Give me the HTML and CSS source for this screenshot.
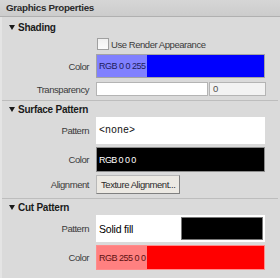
FILE: index.html
```html
<!DOCTYPE html>
<html>
<head>
<meta charset="utf-8">
<link rel="stylesheet" href="styles.css">
</head>
<body>
<div class="panel">
  <div class="header">Graphics Properties</div>
  <div class="body">
    <div class="section">
      <div class="sec-title first"><span class="tri"></span>Shading</div>
      <div class="row row-check">
        <div class="label"></div>
        <div class="check"><span class="box"></span>Use Render Appearance</div>
      </div>
      <div class="row row-color">
        <div class="label">Color</div>
        <div class="swatch blue"><span class="tag tag-blue">RGB 0 0 255</span></div>
      </div>
      <div class="row row-trans">
        <div class="label">Transparency</div>
        <div class="trans">
          <div class="slider"></div>
          <div class="num">0</div>
        </div>
      </div>
    </div>
    <div class="section">
      <div class="sec-title"><span class="tri"></span>Surface Pattern</div>
      <div class="row row-pat">
        <div class="label">Pattern</div>
        <div class="pattern mono">&lt;none&gt;</div>
      </div>
      <div class="row row-gap">
        <div class="label">Color</div>
        <div class="swatch tall black"><span class="tag tag-black">RGB 0 0 0</span></div>
      </div>
      <div class="row row-gap">
        <div class="label">Alignment</div>
        <div class="btn">Texture Alignment...</div>
      </div>
    </div>
    <div class="section last">
      <div class="sec-title"><span class="tri"></span>Cut Pattern</div>
      <div class="row row-pat">
        <div class="label">Pattern</div>
        <div class="pattern solid"><span class="solid-name">Solid fill</span><span class="solid-sw"></span></div>
      </div>
      <div class="row row-gap">
        <div class="label">Color</div>
        <div class="swatch tall red"><span class="tag tag-red">RGB 255 0 0</span></div>
      </div>
    </div>
  </div>
</div>
</body>
</html>
```

FILE: styles.css
```css
html, body { margin: 0; padding: 0; }
body {
  width: 280px;
  height: 278px;
  background: #dadada;
  font-family: "Liberation Sans", Arial, sans-serif;
  font-size: 9.5px;
  color: #2a2a2a;
  overflow: hidden;
}
.panel { width: 280px; height: 278px; display: flex; flex-direction: column; }
.header {
  height: 16px;
  line-height: 16px;
  padding-left: 6px;
  background: linear-gradient(#d6d6d6, #cccccc);
  border-bottom: 1px solid #b0b0b0;
  font-weight: bold;
  font-size: 9.8px;
  letter-spacing: -0.3px;
  color: #2b2b2b;
}
.body {
  flex: 1;
  border-left: 2px solid #e4e4e4;
  padding-right: 2px;
}
.section { border-bottom: 1px solid #bdbdbd; padding-bottom: 4px; }
.section.last { border-bottom: none; }
.sec-title {
  height: 16px;
  font-weight: bold;
  font-size: 10px;
  letter-spacing: -0.25px;
  color: #1a1a1a;
  padding-left: 7px;
  display: flex;
  align-items: center;
  padding-top: 1px;
  box-sizing: border-box;
}
.sec-title.first { height: 20px; padding-top: 1px; }
.tri {
  width: 0; height: 0;
  border-left: 3.5px solid transparent;
  border-right: 3.5px solid transparent;
  border-top: 5px solid #1a1a1a;
  margin-right: 3px;
}
.row { display: flex; align-items: center; }
.label {
  width: 87px;
  text-align: right;
  padding-right: 7px;
  color: #3a3a3a;
  letter-spacing: -0.45px;
  flex: none;
}
.row-check { height: 14px; }
.check { display: flex; align-items: center; color: #3a3a3a; letter-spacing: -0.45px; margin-left: 1px; }
.box {
  width: 10px; height: 10px;
  border: 1px solid #a0a0a0;
  background: linear-gradient(#f0f0f0, #fbfbfb);
  margin-right: 2px;
}
.row-color { margin-top: 3px; }
.swatch {
  width: 167px;
  height: 22px;
  border: 1px solid #a4a4a4;
  display: flex;
  align-items: stretch;
}
.swatch.tall { height: 23px; }
.blue { background: #0000ff; }
.black { background: #000; border-color: #8c8c8c; }
.red { background: #ff0000; border-color: #ff8c8c; }
.tag {
  display: flex;
  align-items: center;
  padding: 0 1px 0 2px;
  font-size: 9px;
  letter-spacing: -0.5px;
}
.tag-blue { background: #8080ff; color: #1c1c5c; }
.tag-black { color: #fff; letter-spacing: -0.6px; }
.tag-red { background: #ff8080; color: #5c1010; }
.row-trans { margin-top: 4px; }
.trans { display: flex; gap: 1px; }
.slider { width: 110px; height: 12px; background: #fff; border: 1px solid #b4b4b4; }
.num {
  width: 52px; height: 12px; line-height: 12px;
  background: #f2f2f2; border: 1px solid #b4b4b4;
  padding-left: 3px; color: #505050;
}
.row-pat { height: 27px; }
.pattern {
  width: 169px;
  height: 27px;
  background: #fff;
  display: flex;
  align-items: center;
  box-sizing: border-box;
}
.mono { font-family: "Liberation Mono", monospace; font-size: 10px; color: #111; padding-left: 3px; }
.row-gap { margin-top: 3px; }
.btn {
  height: 17px;
  line-height: 17px;
  padding: 0 4px;
  background: #ece9e3;
  border: 1px solid #b8b8b8;
  border-right-color: #808080;
  border-bottom-color: #808080;
  letter-spacing: -0.45px;
  color: #2a2a2a;
}
.solid { justify-content: space-between; padding: 0 2px 0 3px; }
.solid-name { font-size: 10.5px; color: #000; letter-spacing: -0.2px; }
.solid-sw { width: 82px; height: 23px; background: #000; border: 1px solid #777; box-sizing: border-box; }
```
